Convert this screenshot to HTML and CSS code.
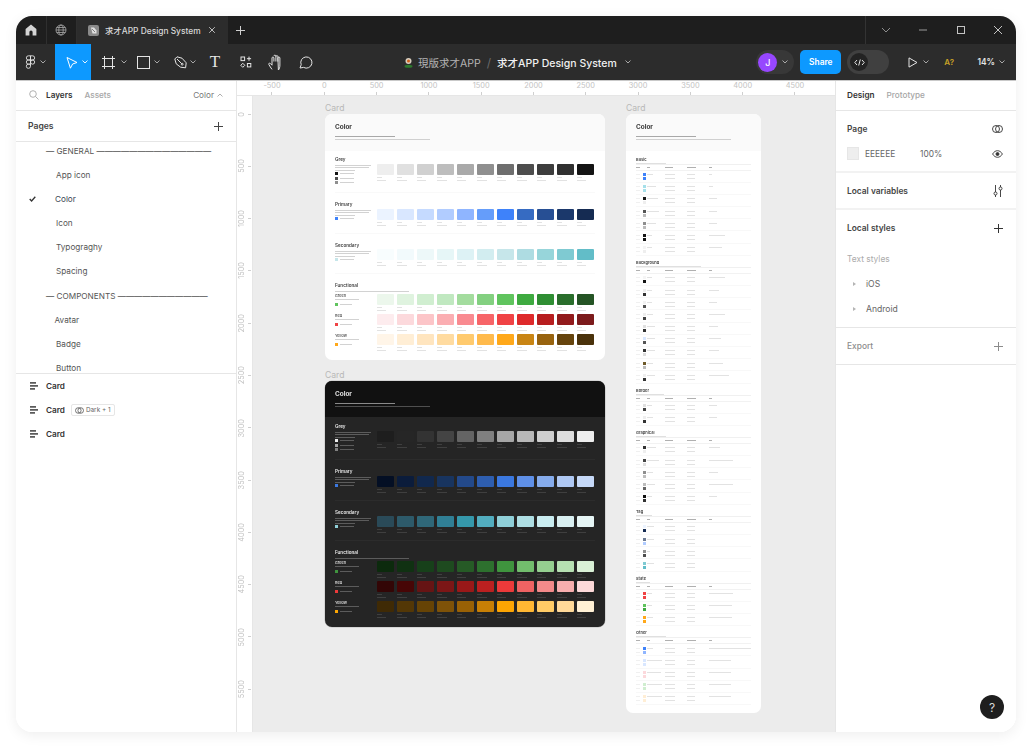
FILE: index.html
```html
<!DOCTYPE html>
<html lang="en">
<head>
    <meta charset="UTF-8">
    <meta name="viewport" content="width=device-width, initial-scale=1.0">
    <title>求才APP Design System</title>
    <link rel="stylesheet" href="styles.css">
</head>
<body>
<div class="window">
    <div class="tabbar">
        <div class="tab-cell">
            <svg width="12" height="12" viewBox="0 0 12 12"><path d="M6 .6 11.4 5v6.4H7.6V8a1.6 1.6 0 0 0-3.2 0v3.4H.6V5z" fill="#d4d4d4"/></svg>
        </div>
        <div class="tab-cell">
            <svg width="12" height="12" viewBox="0 0 12 12" fill="none" stroke="#a8a8a8" stroke-width=".8"><circle cx="6" cy="6" r="5"/><ellipse cx="6" cy="6" rx="2.2" ry="5"/><path d="M1 6h10M1.7 3.5h8.6M1.7 8.5h8.6"/></svg>
        </div>
        <div class="tab-active">
            <svg width="11" height="11" viewBox="0 0 11 11"><rect width="11" height="11" rx="2" fill="#8a8a8a"/><path d="M3 2.5h3l2.5 3v3h-4z" fill="#e0e0e0"/><path d="M4 4l3 3" stroke="#666" stroke-width=".8"/></svg>
            <span class="tab-title">求才APP Design System</span>
            <svg width="8" height="8" viewBox="0 0 8 8" stroke="#bdbdbd" stroke-width="1"><path d="M1.2 1.2l5.6 5.6M6.8 1.2 1.2 6.8"/></svg>
        </div>
        <div class="tab-add">
            <svg width="9" height="9" viewBox="0 0 9 9" stroke="#cfcfcf" stroke-width="1"><path d="M4.5 0v9M0 4.5h9"/></svg>
        </div>
        <div class="win-controls">
            <svg width="10" height="6" viewBox="0 0 10 6" fill="none" stroke="#8c8c8c" stroke-width="1"><path d="M1 1l4 4 4-4"/></svg>
            <svg width="10" height="10" viewBox="0 0 10 10" stroke="#9a9a9a" stroke-width="1"><path d="M1 5h8"/></svg>
            <svg width="10" height="10" viewBox="0 0 10 10" fill="none" stroke="#c4c4c4" stroke-width="1"><rect x="1.5" y="1.5" width="7" height="7"/></svg>
            <svg width="10" height="10" viewBox="0 0 10 10" stroke="#c4c4c4" stroke-width="1"><path d="M1 1l8 8M9 1 1 9"/></svg>
        </div>
    </div>

    <div class="toolbar">
        <div class="tool tool-logo">
            <svg width="11" height="15" viewBox="0 0 12 18" fill="none" stroke="#e4e4e4" stroke-width="1.1"><path d="M6 1H3.5a2.5 2.5 0 0 0 0 5H6zM6 1h2.5a2.5 2.5 0 0 1 0 5H6zM6 6H3.5a2.5 2.5 0 0 0 0 5H6zM6 11H3.5A2.5 2.5 0 1 0 6 13.5z"/><circle cx="8.5" cy="8.5" r="2.5"/></svg>
            <svg class="chev" width="6" height="4" viewBox="0 0 6 4"><path d="M.5.5 3 3 5.5.5"/></svg>
        </div>
        <div class="tool tool-move">
            <svg width="13" height="13" viewBox="0 0 13 13" fill="none" stroke="#fff" stroke-width="1"><path d="M2 1.5 12 6.5 7.6 8 5.4 12.2z"/></svg>
            <svg class="chev" width="6" height="4" viewBox="0 0 6 4"><path d="M.5.5 3 3 5.5.5"/></svg>
        </div>
        <div class="tool tool-frame">
            <svg width="13" height="13" viewBox="0 0 13 13" stroke="#e4e4e4" stroke-width="1"><path d="M2.5 0v13M10.5 0v13M0 2.5h13M0 10.5h13"/></svg>
            <svg class="chev" width="6" height="4" viewBox="0 0 6 4"><path d="M.5.5 3 3 5.5.5"/></svg>
        </div>
        <div class="tool tool-rect">
            <svg width="13" height="13" viewBox="0 0 13 13" fill="none" stroke="#e4e4e4" stroke-width="1"><rect x=".5" y=".5" width="12" height="12"/></svg>
            <svg class="chev" width="6" height="4" viewBox="0 0 6 4"><path d="M.5.5 3 3 5.5.5"/></svg>
        </div>
        <div class="tool tool-pen">
            <svg width="13" height="13" viewBox="0 0 13 13" fill="none" stroke="#e4e4e4" stroke-width="1"><path d="M.8 3 3 .8l5 1.4 4.2 4.6-.6 5-5-.6L2.200 7.800zM3 3l4.800 4.800"/><circle cx="8.200" cy="8.200" r=".9"/></svg>
            <svg class="chev" width="6" height="4" viewBox="0 0 6 4"><path d="M.5.5 3 3 5.5.5"/></svg>
        </div>
        <div class="tool tool-text">T</div>
        <div class="tool tool-res">
            <svg width="12" height="12" viewBox="0 0 12 12" fill="none" stroke="#e4e4e4" stroke-width="1"><rect x="1" y="1" width="3.600" height="3.600"/><path d="M9 .6v4.200M6.900 2.700h4.200M2.800 7.300l2 2-2 2-2-2z"/><rect x="7.400" y="7.500" width="3.400" height="3.400"/></svg>
        </div>
        <div class="tool tool-hand">
            <svg width="15" height="16" viewBox="0 0 15 16" fill="none" stroke="#e4e4e4" stroke-width="1"><path d="M4 15.400C3 14 1.600 12 .8 10.400c-.4-1 .9-1.700 1.600-.9L4 11.200V4c0-1.300 1.900-1.300 1.900 0v3.500m0-5.400c0-1.300 2-1.300 2 0v5.400m0-4.900c0-1.300 2-1.300 2 0v5m0-3.600c0-1.300 2-1.300 2 0v7c0 2.300-.5 3.600-1.500 5.100z"/></svg>
        </div>
        <div class="tool tool-comment">
            <svg width="14" height="14" viewBox="0 0 14 14" fill="none" stroke="#e4e4e4" stroke-width="1"><path d="M1 13l1.200-3.300A5.600 5.600 0 1 1 4.600 12.400L1 13z" stroke-linejoin="round"/></svg>
        </div>

        <div class="file-path">
            <svg width="9" height="11" viewBox="0 0 9 11"><ellipse cx="4.500" cy="9.300" rx="4" ry="1.500" fill="#2d7a2d"/><circle cx="4.500" cy="4" r="3" fill="#d9cfc0"/><circle cx="4.500" cy="4" r="1.500" fill="#d2601a"/></svg>
            <span class="file-team">現版求才APP</span>
            <span class="file-sep">/</span>
            <span class="file-name">求才APP Design System</span>
            <svg class="chev" width="6" height="4" viewBox="0 0 6 4"><path d="M.5.5 3 3 5.500.5"/></svg>
        </div>

        <div class="tool-right">
            <div class="avatar-pill">
                <span class="avatar">J</span>
                <svg class="chev" width="6" height="4" viewBox="0 0 6 4"><path d="M.5.5 3 3 5.500.5"/></svg>
            </div>
            <div class="share">Share</div>
            <div class="dev-toggle">
                <span class="dev-knob">
                    <svg width="11" height="7" viewBox="0 0 11 7" fill="none" stroke="#e4e4e4" stroke-width="1"><path d="M3 1 .8 3.500 3 6M8 1l2.200 2.500L8 6M6.300.5 4.700 6.500"/></svg>
                </span>
            </div>
            <div class="play">
                <svg width="10" height="11" viewBox="0 0 10 11" fill="none" stroke="#e4e4e4" stroke-width="1"><path d="M1 .9 9 5.500 1 10.100z"/></svg>
                <svg class="chev" width="6" height="4" viewBox="0 0 6 4"><path d="M.5.5 3 3 5.500.5"/></svg>
            </div>
            <span class="a-check">A?</span>
            <div class="zoom-level">
                <span>14%</span>
                <svg class="chev" width="6" height="4" viewBox="0 0 6 4"><path d="M.5.5 3 3 5.500.5"/></svg>
            </div>
        </div>
    </div>

    <div class="workspace">
        <aside class="left-panel">
            <div class="panel-tabs">
                <svg class="search" width="10" height="10" viewBox="0 0 10 10" fill="none" stroke="#a8a8a8" stroke-width=".9"><circle cx="4" cy="4" r="3.300"/><path d="M6.500 6.500 9.500 9.500"/></svg>
                <span class="tab-on">Layers</span>
                <span class="tab-off">Assets</span>
                <span class="page-switch">Color
                    <svg width="6" height="4" viewBox="0 0 6 4" fill="none" stroke="#999" stroke-width=".8"><path d="M.5 3.500 3 1l2.500 2.500"/></svg>
                </span>
            </div>
            <div class="pages-head">
                <span>Pages</span>
                <svg width="9" height="9" viewBox="0 0 9 9" stroke="#444" stroke-width="1"><path d="M4.500 0v9M0 4.500h9"/></svg>
            </div>
            <div class="pages-list">
                <div class="page-row page-sep">— GENERAL ——————————————</div>
                <div class="page-row">App icon</div>
                <div class="page-row page-current">
                    <svg width="7" height="6" viewBox="0 0 7 6" fill="none" stroke="#333" stroke-width="1.300"><path d="M.7 3 2.600 5 6.300.8"/></svg>
                    Color
                </div>
                <div class="page-row">Icon</div>
                <div class="page-row">Typograghy</div>
                <div class="page-row">Spacing</div>
                <div class="page-row page-sep">— COMPONENTS ———————————</div>
                <div class="page-row page-tight">Avatar</div>
                <div class="page-row">Badge</div>
                <div class="page-row">Button</div>
            </div>
            <div class="layers-list">
                <div class="layer-row">
                    <svg width="8" height="8" viewBox="0 0 8 8" fill="#333"><rect y=".2" width="6" height="1.400"/><rect y="3.200" width="8" height="1.400"/><rect y="6.200" width="5" height="1.400"/></svg>
                    <span>Card</span>
                </div>
                <div class="layer-row">
                    <svg width="8" height="8" viewBox="0 0 8 8" fill="#333"><rect y=".2" width="6" height="1.400"/><rect y="3.200" width="8" height="1.400"/><rect y="6.200" width="5" height="1.400"/></svg>
                    <span>Card</span>
                    <span class="mode-badge">
                        <svg width="9" height="7" viewBox="0 0 9 7" fill="none" stroke="#555" stroke-width=".8"><circle cx="3.300" cy="3.500" r="2.800"/><circle cx="5.700" cy="3.500" r="2.800"/></svg>
                        Dark + 1
                    </span>
                </div>
                <div class="layer-row">
                    <svg width="8" height="8" viewBox="0 0 8 8" fill="#333"><rect y=".2" width="6" height="1.400"/><rect y="3.200" width="8" height="1.400"/><rect y="6.200" width="5" height="1.400"/></svg>
                    <span>Card</span>
                </div>
            </div>
        </aside>

        <main class="stage">
            <div class="ruler-top" id="rulerTop"></div>
            <div class="ruler-left" id="rulerLeft"></div>
            <div class="canvas" id="canvas"></div>
        </main>

        <aside class="right-panel">
            <div class="panel-tabs right-tabs">
                <span class="tab-on">Design</span>
                <span class="tab-off">Prototype</span>
            </div>
            <section class="prop-section prop-page">
                <div class="prop-head">
                    <span>Page</span>
                    <svg width="11" height="10" viewBox="0 0 11 10" fill="none" stroke="#333" stroke-width=".9"><circle cx="4" cy="5" r="3.500"/><circle cx="7" cy="5" r="3.500"/></svg>
                </div>
                <div class="page-fill">
                    <span class="fill-chip"></span>
                    <span class="fill-hex">EEEEEE</span>
                    <span class="fill-pct">100%</span>
                    <svg width="11" height="8" viewBox="0 0 11 8" fill="none" stroke="#333" stroke-width=".9"><path d="M.6 4C2 1.700 3.600.7 5.500.7S9 1.700 10.400 4C9 6.300 7.400 7.300 5.500 7.300S2 6.300.6 4z"/><circle cx="5.500" cy="4" r="1.500" fill="#333"/></svg>
                </div>
            </section>
            <section class="prop-section prop-vars">
                <div class="prop-head">
                    <span>Local variables</span>
                    <svg width="10" height="12" viewBox="0 0 10 12" fill="none" stroke="#333" stroke-width=".9"><path d="M2.500 0v7M2.500 10v2M7.500 0v2M7.500 5v7"/><circle cx="2.500" cy="8.500" r="1.500"/><circle cx="7.500" cy="3.500" r="1.500"/></svg>
                </div>
            </section>
            <section class="prop-section prop-styles">
                <div class="prop-head">
                    <span>Local styles</span>
                    <svg width="9" height="9" viewBox="0 0 9 9" stroke="#333" stroke-width="1"><path d="M4.500 0v9M0 4.500h9"/></svg>
                </div>
                <div class="style-group">Text styles</div>
                <div class="style-row"><i class="caret"></i>iOS</div>
                <div class="style-row"><i class="caret"></i>Android</div>
            </section>
            <section class="prop-section prop-export">
                <div class="prop-head">
                    <span>Export</span>
                    <svg width="9" height="9" viewBox="0 0 9 9" stroke="#8c8c8c" stroke-width="1"><path d="M4.500 0v9M0 4.500h9"/></svg>
                </div>
            </section>
            <div class="help">?</div>
        </aside>
    </div>
</div>
<script src="app.js"></script>
</body>
</html>
```

FILE: styles.css
```css
* {
    box-sizing: border-box;
}
body {
    margin: 0;
    padding: 16px;
    height: 749px;
    overflow: hidden;
    background: #fff;
    font-family: Inter, "Noto Sans CJK SC", sans-serif;
    font-size: 9px;
    color: #333;
}
.window {
    width: 1000px;
    height: 716px;
    border-radius: 16px;
    overflow: hidden;
    display: flex;
    flex-direction: column;
    box-shadow: 0 3px 14px rgba(0, 0, 0, 0.07);
}

/* title bar */
.tabbar {
    height: 28px;
    display: flex;
    align-items: stretch;
    background: #1e1e1e;
}
.tab-cell {
    width: 30.5px;
    display: flex;
    align-items: center;
    justify-content: center;
    border-right: 1px solid #2f2f2f;
}
.tab-active {
    width: 151px;
    padding: 0 12px 0 11px;
    display: flex;
    align-items: center;
    background: #2c2c2c;
    color: #d8d8d8;
}
.tab-title {
    flex: 1;
    margin-left: 6px;
    font-size: 8.4px;
    font-weight: 500;
    white-space: nowrap;
}
.tab-add {
    width: 24px;
    display: flex;
    align-items: center;
    justify-content: center;
}
.win-controls {
    margin-left: auto;
    width: 151px;
    padding: 0 13px 0 15px;
    display: flex;
    align-items: center;
    justify-content: space-between;
    border-left: 1px solid #333;
}

/* toolbar */
.toolbar {
    height: 37px;
    display: flex;
    align-items: stretch;
    background: #2c2c2c;
    border-bottom: 1px solid #c9c9c9;
    color: #e4e4e4;
}
.chev {
    fill: none;
    stroke: #b8b8b8;
    stroke-width: 0.9;
}
.tool {
    display: flex;
    align-items: center;
    justify-content: flex-start;
}
.tool-logo { width: 39px; padding-left: 9px; gap: 4px; }
.tool-move { width: 36px; background: #0d99ff; padding-left: 9.500px; gap: 4.500px; }
.tool-move .chev { stroke: #fff; }
.tool-frame { width: 36px; padding-left: 10.500px; gap: 6px; }
.tool-rect { width: 35px; padding-left: 10px; gap: 4px; }
.tool-pen { width: 36px; padding-left: 12px; gap: 3px; }
.tool-text {
    width: 34px;
    justify-content: center;
    font-family: "Liberation Serif", serif;
    font-size: 17px;
}
.tool-res { width: 28px; justify-content: center; }
.tool-hand { width: 31px; justify-content: center; }
.tool-comment { width: 29px; justify-content: center; }
.file-path {
    position: absolute;
    left: 404px;
    top: 44px;
    height: 36px;
    display: flex;
    align-items: center;
    font-size: 10.5px;
    white-space: nowrap;
}
.file-team {
    margin-left: 5px;
    color: #b4b4b4;
}
.file-sep {
    margin: 0 6px;
    color: #6a6a6a;
    font-size: 12px;
}
.file-name {
    color: #f0f0f0;
    font-weight: 500;
}
.file-path .chev {
    margin-left: 8px;
}
.tool-right {
    margin-left: auto;
    display: flex;
    align-items: center;
}
.avatar-pill {
    width: 38px;
    height: 24px;
    padding-left: 2px;
    display: flex;
    align-items: center;
    gap: 5px;
    border-radius: 12px;
    background: #383838;
}
.avatar {
    width: 19px;
    height: 19px;
    border-radius: 50%;
    background: #9747ff;
    color: #fff;
    font-size: 9px;
    font-weight: 500;
    display: flex;
    align-items: center;
    justify-content: center;
}
.share {
    width: 41px;
    height: 24px;
    margin-left: 6px;
    border-radius: 5px;
    background: #0d99ff;
    color: #fff;
    font-size: 8.4px;
    font-weight: 600;
    display: flex;
    align-items: center;
    justify-content: center;
}
.dev-toggle {
    width: 42px;
    height: 24px;
    margin-left: 6px;
    padding: 3px;
    border-radius: 12px;
    background: #404040;
}
.dev-knob {
    width: 18px;
    height: 18px;
    border-radius: 50%;
    background: #232323;
    display: flex;
    align-items: center;
    justify-content: center;
}
.play {
    margin-left: 19px;
    display: flex;
    align-items: center;
    gap: 5px;
}
.a-check {
    margin-left: 15px;
    color: #c9a227;
    font-size: 8px;
    font-weight: 600;
}
.zoom-level {
    width: 46px;
    margin-left: 16px;
    padding-right: 11px;
    display: flex;
    align-items: center;
    justify-content: flex-end;
    gap: 4px;
    font-size: 8.4px;
    font-weight: 600;
}

/* main area */
.workspace {
    flex: 1;
    min-height: 0;
    display: flex;
    position: relative;
    background: #fff;
}
.left-panel {
    width: 221px;
    border-right: 1px solid #e6e6e6;
    display: flex;
    flex-direction: column;
}
.panel-tabs {
    height: 30px;
    padding: 0 13px 1px 13px;
    display: flex;
    align-items: center;
    gap: 12px;
    border-bottom: 1px solid #e6e6e6;
    font-weight: 500;
}
.search { margin-right: -5px; }
.tab-on { color: #333; font-weight: 600; font-size: 8.2px; }
.tab-off { color: #a6a6a6; font-size: 8.2px; }
.page-switch {
    margin-left: auto;
    display: flex;
    align-items: center;
    gap: 3px;
    color: #777;
    font-size: 8.2px;
    font-weight: 400;
}
.pages-head {
    height: 31px;
    padding: 0 13px 0 12px;
    display: flex;
    align-items: center;
    justify-content: space-between;
    border-bottom: 1px solid #e6e6e6;
    font-weight: 600;
    font-size: 8.6px;
    color: #444;
}
.pages-list {
    height: 232px;
    overflow: hidden;
    border-bottom: 1px solid #e6e6e6;
}
.page-row {
    height: 24.2px;
    padding-left: 40px;
    display: flex;
    align-items: center;
    color: #555;
    white-space: nowrap;
    font-size: 8.2px;
}
.page-row:first-child {
    margin-top: -3.6px;
}
.page-sep {
    padding-left: 30px;
}
.page-tight { padding-left: 38.5px; }
.page-current {
    padding-left: 13px;
    gap: 19px;
    color: #3b4654;
}
.layer-row {
    height: 24.2px;
    padding-left: 14px;
    display: flex;
    align-items: center;
    font-size: 8.2px;
    font-weight: 600;
    color: #333;
}
.layer-row span:first-of-type {
    margin-left: 8px;
}
.layer-row .mode-badge {
    height: 12px;
    margin-left: 6px;
    padding: 0 3px;
    display: flex;
    align-items: center;
    gap: 2px;
    border: 1px solid #e6e6e6;
    border-radius: 2px;
    font-size: 6.4px;
    font-weight: 400;
    color: #666;
}

/* canvas and rulers */
.stage {
    flex: 1;
    min-width: 0;
    min-height: 0;
    display: grid;
    grid-template-columns: 16px 1fr;
    grid-template-rows: 15px minmax(0, 1fr);
}
.ruler-top {
    grid-column: 1 / 3;
    grid-row: 1;
    padding-left: 8.850px;
    display: flex;
    overflow: hidden;
    border-bottom: 1px solid #e6e6e6;
}
.ruler-mark {
    flex: 0 0 52.3px;
    display: flex;
    flex-direction: column;
    align-items: center;
    justify-content: space-between;
    font-size: 7.4px;
    line-height: 9px;
    color: #c2c2c2;
}
.ruler-mark::after {
    content: "";
    width: 1px;
    height: 3px;
    background: #cfcfcf;
}
.ruler-left {
    grid-column: 1;
    grid-row: 2;
    border-right: 1px solid #e6e6e6;
    overflow: hidden;
}
.ruler-left-inner {
    margin-top: -8.150px;
}
.ruler-vmark {
    height: 52.3px;
    display: flex;
    align-items: center;
    justify-content: flex-end;
    gap: 2px;
    padding-right: 1px;
    font-size: 7.4px;
    color: #c2c2c2;
}
.ruler-vmark span {
    writing-mode: vertical-rl;
    transform: rotate(180deg);
}
.ruler-vmark::after {
    content: "";
    width: 3px;
    height: 1px;
    background: #cfcfcf;
}
.canvas {
    grid-column: 2;
    grid-row: 2;
    position: relative;
    overflow: hidden;
    background: #ececec;
}
.frame {
    position: absolute;
}
.frame-label {
    height: 11px;
    line-height: 11px;
    font-size: 8.6px;
    color: #b8b8b8;
}
.card {
    border-radius: 7px;
    overflow: hidden;
    background: #fff;
    font-family: Inter, sans-serif;
}
/* the frames are seen at 14% zoom, so their contents look soft */
.card-head > *,
.card-body {
    filter: blur(0.3px);
}
.card-wide { width: 280px; padding-bottom: 7px; }
.card-table { width: 135px; padding-bottom: 3.500px; }
.card-head {
    height: 37px;
    padding: 9px 10px 0;
    background: #fafafa;
}
.card-head h2 {
    margin: 0 0 5px;
    font-size: 6.4px;
    line-height: 8px;
    font-weight: 700;
    color: #333;
}
.bar {
    display: block;
    height: 1px;
    background: #d2d2d2;
}
.card-head .bar {
    margin-bottom: 2px;
    background: #a8a8a8;
}
.card-head .bar + .bar {
    background: #d0d0d0;
}
.card-body {
    padding: 6px 10px 0;
}
.pal {
    display: flex;
    height: 31px;
    margin-bottom: 9px;
    border-bottom: 1px solid #f9f9f9;
}
.pal-grey { height: 36px; }
.pal-primary { height: 32px; }
.pal-func {
    height: auto;
    margin: 0;
    border: 0;
    display: block;
}
.pal-info {
    width: 42px;
    flex: none;
    padding-right: 5px;
}
.pal-info h3 {
    margin: 0;
    font-size: 4.6px;
    line-height: 6px;
    font-weight: 600;
    color: #444;
}
.pal-info .bar {
    margin-top: 1.500px;
}
.pal-legend {
    display: flex;
    align-items: center;
    gap: 2px;
    margin-top: 1.500px;
}
.pal-legend i {
    width: 3px;
    height: 3px;
}
.pal-legend .bar {
    margin: 0;
}
.swatches {
    display: flex;
    gap: 3px;
    margin-top: 7px;
}
.pal-secondary .swatches { margin-top: 6px; }
.swatch {
    width: 17px;
}
.chip {
    height: 11px;
    border-radius: 1px;
    margin-bottom: 2px;
}
.swatch .bar {
    margin-bottom: 2px;
    background: #e2e2e2;
}
.func-sub {
    height: 2px;
}
.func-row {
    display: flex;
    height: 20px;
}
.func-row h4 {
    margin: 0;
    font-size: 3.800px;
    line-height: 5px;
    font-weight: 500;
    color: #444;
}
.func-row .swatches {
    margin-top: 1px;
}
.func-row .pal-legend {
    margin-top: 3px;
}
.card-dark {
    background: #252525;
    box-shadow: 0 0 0 .5px #bdbdbd;
}
.card-dark .card-head {
    height: 36px;
    background: #111;
}
.card-dark .card-body {
    padding-top: 7px;
}
.card-dark h2,
.card-dark h3,
.card-dark h4 {
    color: #e6e6e6;
}
.card-dark .bar { background: #5c5c5c; }
.card-dark .card-head .bar { background: #8a8a8a; }
.card-dark .card-head .bar + .bar { background: #4f4f4f; }
.card-dark .swatch .bar { background: #3f3f3f; }
.card-dark .pal { border-bottom-color: #2c2c2c; }

/* token table */
.tbl {
    margin-bottom: 4px;
}
.tbl:first-child {
    margin-top: -0.500px;
}
.tbl h3 {
    margin: 0;
    font-size: 4px;
    line-height: 6px;
    font-weight: 600;
    color: #444;
}
.tbl-sub {
    height: 2px;
    border-bottom: 1px solid #f0f0f0;
    display: flex;
}
.tbl-sub .bar {
    background: #e0e0e0;
}
.tbl-line {
    display: grid;
    grid-template-columns: 7px 4px 18px 22px 22px 1fr;
    align-items: center;
    height: 4px;
}
.tbl-line .bar {
    background: #e2e2e2;
}
.tbl-line .bar.bar-faint {
    background: #f0f0f0;
}
.tbl-line i {
    width: 3px;
    height: 3px;
}
.tbl-head {
    height: 6px;
    border-bottom: 1px solid #f2f2f2;
}
.tbl-head .bar {
    background: #b0b0b0;
}
.tbl-row {
    height: 12.2px;
    padding-top: 2px;
    border-bottom: 1px solid #f8f8f8;
}

/* right panel */
.right-panel {
    width: 181px;
    position: relative;
    border-left: 1px solid #e6e6e6;
    background: #fff;
}
.right-tabs {
    padding-left: 11px;
    gap: 12px;
}
.prop-section {
    padding: 0 13px 0 11px;
    border-bottom: 1px solid #e6e6e6;
}
.prop-head {
    height: 36px;
    display: flex;
    align-items: center;
    justify-content: space-between;
    font-size: 8.4px;
    font-weight: 600;
    color: #444;
}
.prop-page {
    height: 62px;
    border-bottom: 2px solid #f2f2f2;
}
.prop-vars { height: 37px; border-bottom: 2px solid #f2f2f2; }
.prop-styles { height: 118px; }
.prop-export { height: 37px; }
.prop-export .prop-head { color: #8c8c8c; font-weight: 500; }
.page-fill {
    display: flex;
    align-items: center;
    font-size: 8.4px;
    color: #666;
}
.fill-chip {
    width: 12px;
    height: 13px;
    background: #eee;
    border: 1px solid #e6e6e6;
}
.fill-hex { margin-left: 6px; width: 55px; }
.fill-pct { flex: 1; }
.style-group {
    height: 25px;
    display: flex;
    align-items: center;
    color: #ababab;
    font-size: 8.4px;
}
.style-row {
    height: 25px;
    padding-left: 19px;
    position: relative;
    display: flex;
    align-items: center;
    color: #666;
    font-size: 8.6px;
}
.caret {
    position: absolute;
    left: 6px;
    top: 11px;
    border-left: 3px solid #b4b4b4;
    border-top: 2px solid transparent;
    border-bottom: 2px solid transparent;
}
.help {
    position: absolute;
    right: 12px;
    bottom: 13px;
    width: 24px;
    height: 24px;
    border-radius: 50%;
    background: #1e1e1e;
    color: #d8d8d8;
    font-size: 12px;
    display: flex;
    align-items: center;
    justify-content: center;
}
```

FILE: app.js
```js
const LIGHT = {
    grey: ['#eeeeee', '#e0e0e0', '#d0d0d0', '#bdbdbd', '#a9a9a9', '#8f8f8f', '#6e6e6e', '#4d4d4d', '#3d3d3d', '#303030', '#141414'],
    primary: ['#ebf3ff', '#d9e7ff', '#c5daff', '#b1ccff', '#8fb5ff', '#659dfa', '#3e82fa', '#366bc2', '#274f94', '#1b386b', '#152b52'],
    secondary: ['#f8fdfe', '#f2fafc', '#edf8f9', '#e6f6f7', '#ddf2f5', '#d2edf0', '#c6e6ea', '#aedce2', '#97d5da', '#7fcad2', '#62bdc8'],
    green: ['#ecf7ec', '#dff3df', '#d0eed0', '#c0e8c0', '#a3dc9e', '#83d080', '#60c45e', '#3eaa40', '#2f8e33', '#2a6e2c', '#255425'],
    red: ['#fdecee', '#fcd9dc', '#fcc5c8', '#fbaeb2', '#f98a90', '#f76568', '#f04345', '#de2a2b', '#b71e1f', '#921b1c', '#7c1b1c'],
    yellow: ['#fff5e8', '#ffeed5', '#ffe5bf', '#ffdba0', '#ffca6e', '#ffba4c', '#ffa81a', '#c98514', '#98630f', '#66440d', '#4a320b']
};

const DARK = {
    grey: ['#1e1e1e', '#262626', '#333333', '#444444', '#646464', '#808080', '#a6a6a6', '#b8b8b8', '#cecece', '#dddddd', '#eeeeee'],
    primary: ['#040f24', '#0b1c3b', '#11284d', '#18345f', '#23498a', '#2e5eb0', '#3b78e0', '#5f90e8', '#86acec', '#afc8f3', '#c6d9f8'],
    secondary: ['#2a4a58', '#2d5a6a', '#2f6778', '#307f95', '#3598ab', '#52adbf', '#8fcfd8', '#aedee3', '#c9ecf0', '#d9eff1', '#e6f5f5'],
    green: ['#0c2a0d', '#103112', '#17401a', '#1e4a1f', '#265a26', '#2d702e', '#3f943e', '#72bd6d', '#95cf90', '#b6e0b2', '#d9f0d6'],
    red: ['#330606', '#470606', '#661414', '#7c1616', '#991818', '#bb2020', '#ec3a3a', '#ef6363', '#f38a8a', '#f8aeae', '#fdd9d9'],
    yellow: ['#3f2a05', '#533706', '#664305', '#7e5208', '#996105', '#c77f05', '#fca503', '#ffb733', '#ffcb66', '#ffd999', '#fff0d4']
};

// colour pairs and bar widths for the token table: [light, dark, name, note]
const TOKENS = [
    ['Basic', 30, [['#3e82fa', '#3e82fa', 6, 3], ['#a6e0ea', '#a6e0ea', 9, 4], ['#1a1a1a', '#eeeeee', 11, 8], ['#555555', '#bbbbbb', 12, 8], ['#8f8f8f', '#bbbbbb', 9, 8], ['#141414', '#141414', 5, 16], ['#f5f5f5', '#eeeeee', 5, 13]]],
    ['Background', 65, [['#f5f5f5', '#141414', 5, 16], ['#eeeeee', '#333333', 5, 10], ['#f2f2f2', '#555555', 5, 8], ['#eeeeee', '#444444', 6, 16], ['#e0e0e0', '#333333', 8, 9], ['#d9e7ff', '#555555', 8, 12], ['#333333', '#dddddd', 8, 10], ['#6e5a2a', '#bbbbbb', 6, 14], ['#eeeeee', '#333333', 8, 20]]],
    ['Border', 28, [['#e0e0e0', '#444444', 5, 8], ['#eeeeee', '#333333', 6, 8]]],
    ['Graphical', 30, [['#333333', '#eeeeee', 9, 11], ['#444444', '#e0e0e0', 12, 24], ['#8f8f8f', '#bdbdbd', 6, 9], ['#bdbdbd', '#666666', 8, 24], ['#111111', '#333333', 5, 8]]],
    ['Tag', 16, [['#ebf3ff', '#152b52', 7, 0], ['#6e7c94', '#b1ccff', 7, 0], ['#8f8f8f', '#4d4d4d', 3, 0], ['#7fcad2', '#62bdc8', 7, 0]]],
    ['State', 14, [['#f04345', '#f04345', 5, 24], ['#60c45e', '#3eaa40', 5, 23], ['#ffa81a', '#ffa81a', 6, 23]]],
    ['Other', 30, [['#3e82fa', '#8fb5ff', 6, 42], ['#d9e7ff', '#d9e7ff', 15, 22], ['#fcd9dc', '#fcd9dc', 14, 22], ['#d0eed0', '#d0eed0', 15, 22], ['#ffeed5', '#ffeed5', 15, 22]]]
];

function bar(width, extra) {
    const el = document.createElement('span');
    el.className = extra ? 'bar ' + extra : 'bar';
    el.style.width = width + 'px';
    return el;
}

function make(tag, className, text) {
    const el = document.createElement(tag);
    if (className) el.className = className;
    if (text) el.textContent = text;
    return el;
}

function swatches(colors) {
    const row = make('div', 'swatches');
    colors.forEach((color, i) => {
        const swatch = make('div', 'swatch');
        const chip = make('div', 'chip');
        chip.style.background = color;
        swatch.append(chip, bar(5), bar(i % 2 ? 10 : 9));
        row.appendChild(swatch);
    });
    return row;
}

function legend(color, width) {
    const el = make('div', 'pal-legend');
    const dot = make('i');
    dot.style.background = color;
    el.append(dot, bar(width));
    return el;
}

function palette(name, title, colors, legends) {
    const section = make('section', 'pal pal-' + name);
    const info = make('div', 'pal-info');
    info.append(make('h3', '', title), bar(36), bar(34), bar(20));
    legends.forEach((l) => info.appendChild(legend(l, 14)));
    section.append(info, swatches(colors));
    return section;
}

function funcRow(title, color, colors) {
    const row = make('div', 'func-row');
    const info = make('div', 'pal-info');
    info.append(make('h4', '', title), bar(24), legend(color, 12));
    row.append(info, swatches(colors));
    return row;
}

function colorCard(set, dark) {
    const card = make('div', dark ? 'card card-wide card-dark' : 'card card-wide');
    const head = make('div', 'card-head');
    head.append(make('h2', '', 'Color'), bar(60), bar(95));
    const body = make('div', 'card-body');
    const func = make('section', 'pal pal-func');
    const sub = make('div', 'func-sub');
    sub.appendChild(bar(74));
    const h = make('div', 'pal-info');
    h.style.width = 'auto';
    h.append(make('h3', '', 'Functional'), sub);
    func.append(
        h,
        funcRow('Green', set.green[6], set.green),
        funcRow('Red', set.red[6], set.red),
        funcRow('Yellow', set.yellow[6], set.yellow)
    );
    body.append(
        palette('grey', 'Grey', set.grey, dark ? ['#eeeeee', '#a6a6a6', '#808080'] : ['#141414', '#4d4d4d', '#8f8f8f']),
        palette('primary', 'Primary', set.primary, [set.primary[6]]),
        palette('secondary', 'Secondary', set.secondary, [dark ? '#8fcfd8' : '#c6e6ea']),
        func
    );
    card.append(head, body);
    return card;
}

function tblLine(cells, color) {
    const line = make('div', 'tbl-line');
    const dot = make('i');
    if (color) dot.style.background = color;
    line.append(
        bar(4, 'bar-faint'),
        dot,
        cells[0] ? bar(cells[0]) : make('span'),
        bar(cells[1]),
        bar(cells[2]),
        cells[3] ? bar(cells[3]) : make('span')
    );
    return line;
}

function tokenCard() {
    const card = make('div', 'card card-table');
    const head = make('div', 'card-head');
    head.append(make('h2', '', 'Color'), bar(60), bar(95));
    const body = make('div', 'card-body');
    TOKENS.forEach(([title, subWidth, rows]) => {
        const tbl = make('section', 'tbl');
        const sub = make('div', 'tbl-sub');
        sub.appendChild(bar(subWidth));
        const header = make('div', 'tbl-line tbl-head');
        header.append(bar(4), make('span'), bar(3), bar(8), bar(9), bar(3));
        tbl.append(make('h3', '', title), sub, header);
        rows.forEach(([light, dark, name, note]) => {
            const row = make('div', 'tbl-row');
            row.append(tblLine([name, 10, 8, note], light), tblLine([0, 10, 8, 0], dark));
            tbl.appendChild(row);
        });
        body.appendChild(tbl);
    });
    card.append(head, body);
    return card;
}

function frame(left, top, card) {
    const el = make('div', 'frame');
    el.style.left = left + 'px';
    el.style.top = top + 'px';
    el.append(make('div', 'frame-label', 'Card'), card);
    return el;
}

const canvas = document.getElementById('canvas');
canvas.append(
    frame(72, 7, colorCard(LIGHT, false)),
    frame(72, 274, colorCard(DARK, true)),
    frame(373, 7, tokenCard())
);

const rulerTop = document.getElementById('rulerTop');
for (let v = -500; v <= 4500; v += 500) {
    rulerTop.appendChild(make('div', 'ruler-mark', String(v)));
}

const rulerLeft = make('div', 'ruler-left-inner');
for (let v = 0; v <= 5500; v += 500) {
    const mark = make('div', 'ruler-vmark');
    mark.appendChild(make('span', '', String(v)));
    rulerLeft.appendChild(mark);
}
document.getElementById('rulerLeft').appendChild(rulerLeft);
```
